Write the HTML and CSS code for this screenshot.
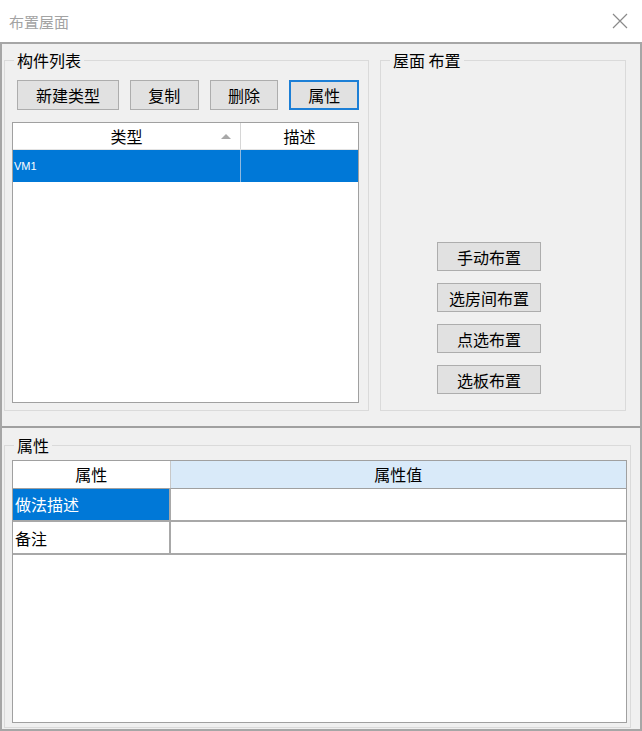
FILE: index.html
```html
<!DOCTYPE html>
<html lang="zh-CN">
<head>
  <meta charset="UTF-8" />
  <title>布置屋面</title>
  <link rel="stylesheet" href="styles.css">
</head>
<body>

  <div class="titlebar">
    <span class="title">布置屋面</span>
    <svg class="close" width="16" height="16" viewBox="0 0 16 16">
      <path d="M1 1 L15 15 M15 1 L1 15" stroke="#8a8a8a" stroke-width="1.2" fill="none" />
    </svg>
  </div>

  <div class="window">
    <div class="top-pane">
      <fieldset class="group group-list">
        <legend>构件列表</legend>
        <div class="group-body list-body">
          <div class="toolbar">
            <button class="btn btn-wide">新建类型</button>
            <button class="btn">复制</button>
            <button class="btn">删除</button>
            <button class="btn btn-focus">属性</button>
          </div>
          <div class="listview">
            <div class="lv-head">
              <div class="lv-col col-type">类型<span class="sort-arrow"></span></div>
              <div class="lv-col col-desc">描述</div>
            </div>
            <div class="lv-row selected">
              <div class="lv-cell col-type">VM1</div>
              <div class="lv-cell col-desc"></div>
            </div>
          </div>
        </div>
      </fieldset>

      <fieldset class="group group-layout">
        <legend>屋面 布置</legend>
        <div class="layout-actions">
          <button class="btn btn-action">手动布置</button>
          <button class="btn btn-action">选房间布置</button>
          <button class="btn btn-action">点选布置</button>
          <button class="btn btn-action">选板布置</button>
        </div>
      </fieldset>
    </div>

    <div class="splitter"></div>

    <fieldset class="group group-props">
      <legend>属性</legend>
      <div class="group-body props-body">
        <div class="prop-grid">
          <table>
            <colgroup>
              <col class="col-name">
              <col>
            </colgroup>
            <tr>
              <th class="th-name">属性</th>
              <th class="th-value">属性值</th>
            </tr>
            <tr>
              <td class="cell-selected">做法描述</td>
              <td></td>
            </tr>
            <tr>
              <td>备注</td>
              <td></td>
            </tr>
          </table>
        </div>
      </div>
    </fieldset>
  </div>

</body>
</html>
```

FILE: styles.css
```css
* {
  margin: 0;
  padding: 0;
  box-sizing: border-box;
}

html, body {
  width: 642px;
  height: 731px;
  background-color: #fff;
  font-family: "Noto Sans CJK SC", "Liberation Sans", sans-serif;
  font-size: 16px;
  color: #000;
  overflow: hidden;
}

.titlebar {
  height: 42px;
  display: flex;
  align-items: center;
  justify-content: space-between;
  padding: 0 14px 0 9px;
  background-color: #fff;
}

.title {
  color: #a3a3a3;
  font-size: 15px;
}

.close {
  display: block;
}

.window {
  height: 689px;
  border: 2px solid #a6a6a6;
  background-color: #f0f0f0;
}

.top-pane {
  display: flex;
  align-items: stretch;
  padding: 6px 0 0 2px;
}

.group {
  border: 1px solid #dadada;
  min-width: 0;
  padding: 0;
}

.group legend {
  margin-left: 9px;
  padding: 0 3px;
  font-size: 16px;
  line-height: 20px;
}

.group-list {
  width: 365px;
}

.list-body {
  padding: 0 9px 7px 7px;
}

.toolbar {
  display: flex;
  gap: 11px;
  margin-top: 10px;
  padding-left: 5px;
}

.btn {
  height: 30px;
  width: 70px;
  background-color: #e1e1e1;
  border: 1px solid #adadad;
  font-family: inherit;
  font-size: 16px;
  color: #000;
}

.btn-wide {
  width: 104px;
}

.btn-focus {
  width: 71px;
  border: 2px solid #1c7fd6;
}

.listview {
  margin-top: 12px;
  height: 281px;
  background-color: #fff;
  border: 1px solid #a0a0a0;
}

.lv-head {
  display: flex;
  height: 27px;
  border-bottom: 1px solid #e3e3e3;
}

.lv-col {
  line-height: 26px;
  text-align: center;
}

.col-type {
  width: 228px;
  border-right: 1px solid #d6d6d6;
  position: relative;
}

.col-desc {
  flex: 1;
}

.sort-arrow {
  position: absolute;
  right: 9px;
  top: 11px;
  width: 0;
  height: 0;
  border-left: 5px solid transparent;
  border-right: 5px solid transparent;
  border-bottom: 5px solid #a8a8a8;
}

.lv-row {
  display: flex;
  height: 32px;
}

.lv-row.selected {
  background-color: #0078d7;
  color: #fff;
}

.lv-cell {
  font-family: "Liberation Sans", sans-serif;
  font-size: 11px;
  line-height: 32px;
  padding-left: 1px;
}

.lv-row.selected .col-type {
  border-right-color: #8fb9e0;
}

.group-layout {
  width: 246px;
  margin-left: 11px;
  display: flex;
  flex-direction: column;
}

.layout-actions {
  flex: 1;
  display: flex;
  flex-direction: column;
  align-items: flex-start;
  justify-content: flex-end;
  gap: 12px;
  padding: 0 0 16px 56px;
}

.btn-action {
  width: 104px;
  height: 29px;
}

.splitter {
  margin-top: 15px;
  border-bottom: 2px solid #a0a0a0;
}

.group-props {
  margin: 7px 0 0 2px;
  width: 627px;
}

.props-body {
  padding: 5px 3px 4px 7px;
}

.prop-grid {
  height: 263px;
  background-color: #fff;
  border: 1px solid #a0a0a0;
}

.prop-grid table {
  width: 100%;
  border-collapse: collapse;
  table-layout: fixed;
}

.col-name {
  width: 157px;
}

.prop-grid th {
  height: 27px;
  font-weight: normal;
  text-align: center;
  border-bottom: 1px solid #a0a0a0;
}

.th-name {
  background-color: #fff;
  border-right: 1px solid #c8c8c8;
}

.th-value {
  background-color: #d9eaf9;
}

.prop-grid td {
  height: 33px;
  padding-left: 2px;
  border-bottom: 2px solid #a8a8a8;
  border-right: 2px solid #a8a8a8;
}

.prop-grid td:last-child {
  border-right: none;
}

.prop-grid td.cell-selected {
  background-color: #0078d7;
  color: #fff;
}
```
